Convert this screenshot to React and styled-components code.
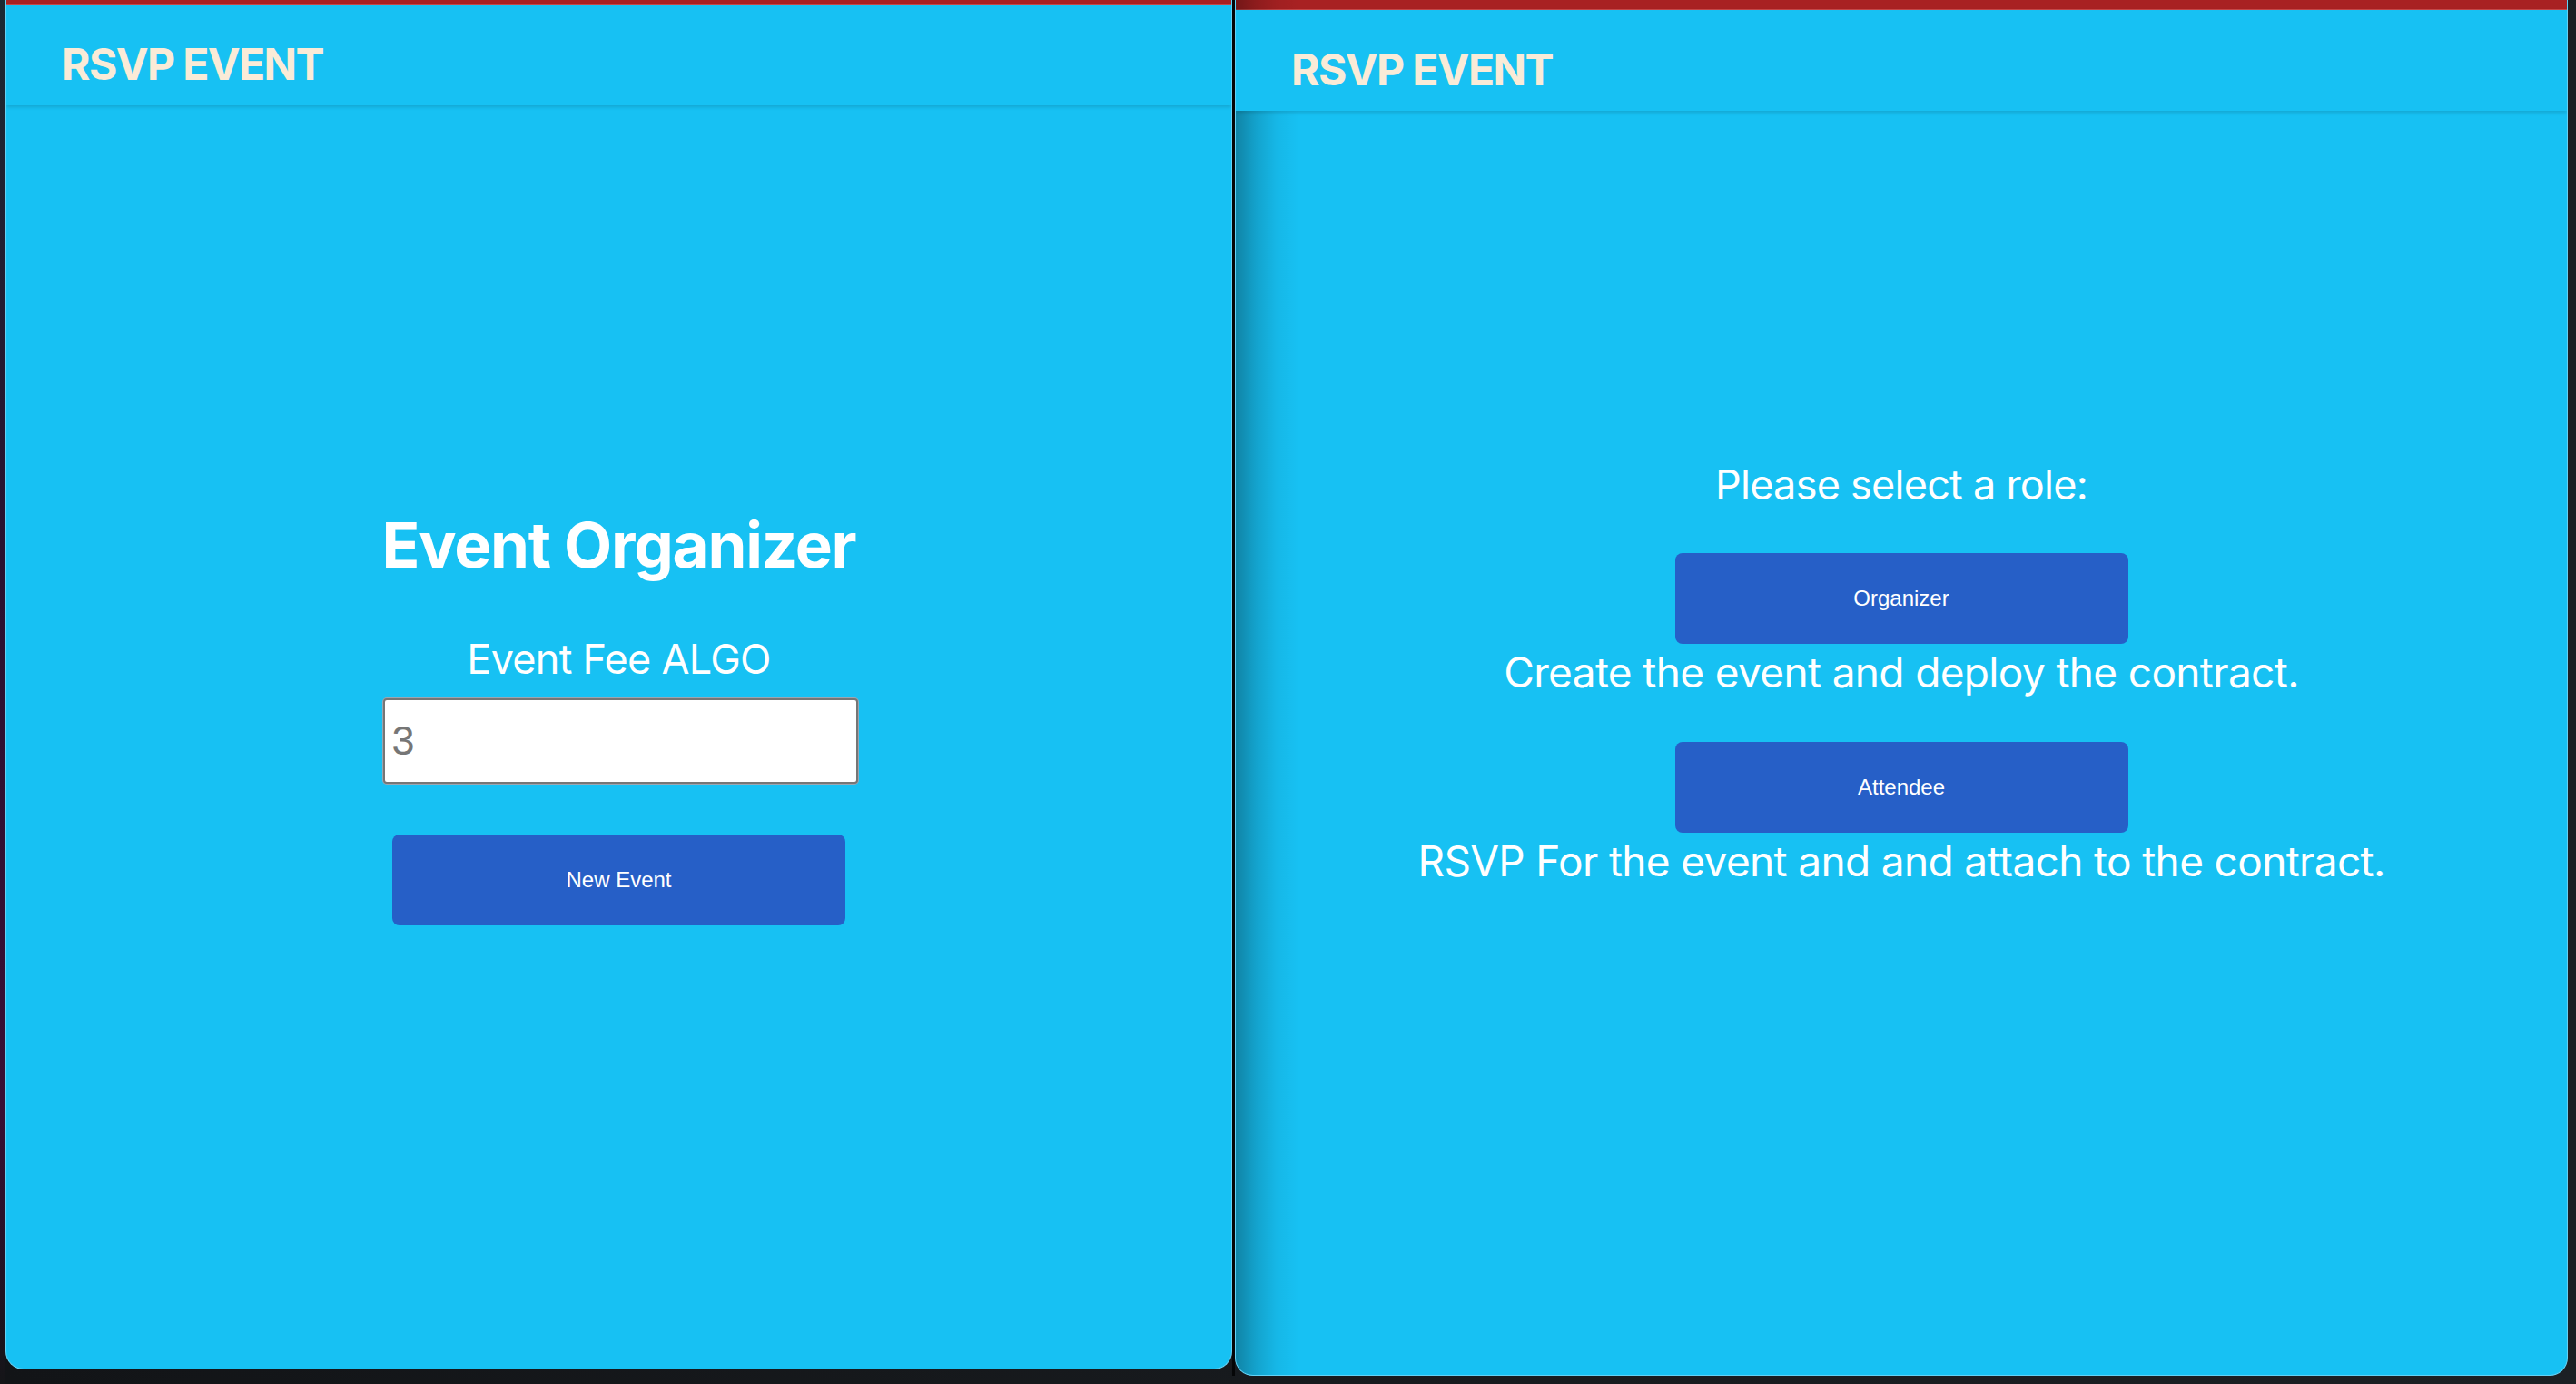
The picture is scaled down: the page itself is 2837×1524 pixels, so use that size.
import React from "react";
import styled, { createGlobalStyle } from "styled-components";

const GlobalStyle = createGlobalStyle`
  html, body {
    margin: 0;
    padding: 0;
    background: #15181b;
    overflow: hidden;
  }
  * {
    box-sizing: border-box;
  }
`;

function OrganizerWindow() {
  return (
    <Window width={1351} height={1508}>
      <TitleStrip height={5} />
      <Header>RSVP EVENT</Header>
      <Main top={442}>
        <Heading>Event Organizer</Heading>
        <Label>Event Fee ALGO</Label>
        <FeeInput type="number" defaultValue="3" />
        <ActionButton spacing={56}>New Event</ActionButton>
      </Main>
    </Window>
  );
}

function RoleWindow() {
  return (
    <Window width={1468} height={1515} shaded>
      <TitleStrip height={11} />
      <Header>RSVP EVENT</Header>
      <Main top={384}>
        <Label>Please select a role:</Label>
        <ActionButton spacing={48}>Organizer</ActionButton>
        <Description>Create the event and deploy the contract.</Description>
        <ActionButton spacing={49}>Attendee</ActionButton>
        <Description>RSVP For the event and and attach to the contract.</Description>
      </Main>
    </Window>
  );
}

export default function App() {
  return (
    <>
      <GlobalStyle />
      <Desktop>
        <EdgeStrip />
        <OrganizerWindow />
        <Divider />
        <RoleWindow />
      </Desktop>
    </>
  );
}

const Desktop = styled.div`
  display: flex;
  align-items: flex-start;
  width: 2837px;
  height: 1524px;
  background: linear-gradient(to right, #121417, #1c2024);
`;

const EdgeStrip = styled.div`
  width: 6px;
  height: 1524px;
  flex-shrink: 0;
  background: linear-gradient(to bottom, #1b2a33, #2a1230 40%, #3a0f35 80%, #141518);
`;

const Divider = styled.div`
  width: 3px;
  height: 1515px;
  flex-shrink: 0;
  background: #050607;
`;

const Window = styled.section`
  position: relative;
  display: flex;
  flex-direction: column;
  flex-shrink: 0;
  width: ${(p) => p.width}px;
  height: ${(p) => p.height}px;
  background: #17c1f3;
  border: 1px solid #62d2f6;
  border-top: none;
  border-radius: 0 0 20px 20px;
  overflow: hidden;
  font-family: Inter, "Noto Sans", sans-serif;

  &::after {
    content: "";
    display: ${(p) => (p.shaded ? "block" : "none")};
    position: absolute;
    top: 0;
    left: 0;
    bottom: 0;
    width: 70px;
    pointer-events: none;
    background: linear-gradient(
      to right,
      rgba(0, 0, 0, 0.32),
      rgba(0, 0, 0, 0.16) 22px,
      rgba(0, 0, 0, 0.05) 45px,
      rgba(0, 0, 0, 0)
    );
  }
`;

const TitleStrip = styled.div`
  height: ${(p) => p.height}px;
  flex-shrink: 0;
  background: #a82122;
  border-bottom: 1px solid #c84a4a;
`;

const Header = styled.header`
  position: relative;
  z-index: 1;
  height: 111px;
  flex-shrink: 0;
  padding: 37px 0 0 61px;
  font-size: 48px;
  font-weight: 700;
  line-height: 58px;
  letter-spacing: -1.6px;
  color: #faebd7;
  background: #17c1f3;
  box-shadow: 0 2px 4px rgba(0, 0, 0, 0.14);
`;

const Main = styled.main`
  flex: 1;
  display: flex;
  flex-direction: column;
  align-items: center;
  padding-top: ${(p) => p.top}px;
  color: #ffffff;
`;

const Heading = styled.h1`
  margin: 0 0 56px;
  font-size: 69px;
  font-weight: 700;
  line-height: 84px;
  letter-spacing: -1.2px;
`;

const Label = styled.div`
  font-size: 45px;
  font-weight: 400;
  line-height: 55px;
  letter-spacing: -0.75px;
`;

const Description = styled.p`
  margin: 3px 0 0;
  font-size: 46px;
  font-weight: 400;
  line-height: 56px;
  letter-spacing: -0.65px;
  white-space: nowrap;
`;

const FeeInput = styled.input`
  width: 523px;
  height: 94px;
  margin: 16px 0 0 3px;
  padding: 0 8px;
  font-family: "Liberation Sans", Arial, sans-serif;
  font-size: 45px;
  color: #767676;
  background: #ffffff;
  border: 2px solid #767676;
  border-radius: 4px;
  box-shadow: 0 0 0 1px #9aa6b2;
  outline: none;
  -moz-appearance: textfield;

  &::-webkit-inner-spin-button,
  &::-webkit-outer-spin-button {
    -webkit-appearance: none;
    margin: 0;
  }
`;

const ActionButton = styled.button`
  width: 499px;
  height: 100px;
  margin-top: ${(p) => p.spacing}px;
  padding: 0;
  border: none;
  border-radius: 8px;
  background: #265fc7;
  color: #ffffff;
  font-family: "Liberation Sans", Arial, sans-serif;
  font-size: 24px;
  cursor: pointer;
`;
